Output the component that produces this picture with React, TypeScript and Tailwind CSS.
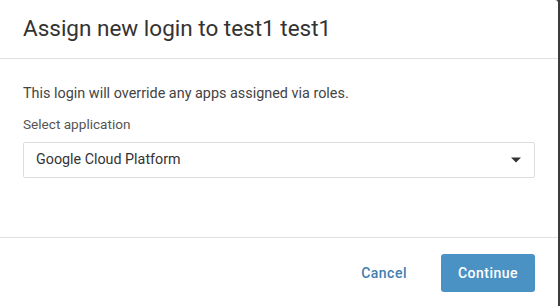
import { IoMdArrowDropdown } from 'react-icons/io';

const App = () => {
    return (
        <div className="flex h-[306px] w-[560px] bg-[#3c3c3c]" style={{ fontFamily: 'Roboto, "Liberation Sans", sans-serif' }}>
            <div className="flex w-[558px] flex-col rounded-tr-[3px] bg-white">
                {/* header */}
                <div className="flex h-[59px] items-center border-b border-[#e1e1e1] px-[23px]">
                    <h1 className="text-[22.5px] font-normal text-[#333333]">Assign new login to test1 test1</h1>
                </div>

                {/* body */}
                <div className="flex h-[179px] flex-col border-b border-[#e1e1e1] px-[23px] pt-[25px]">
                    <p className="text-[14.4px] leading-[20px] text-[#444444]">
                        This login will override any apps assigned via roles.
                    </p>
                    <label className="mt-[10px] text-[13.6px] leading-[20px] text-[#555555]">Select application</label>
                    <div className="mt-[8px] flex h-[36px] items-center justify-between rounded-[2px] border border-[#dddddd] pl-[12px] pr-[8px]">
                        <span className="text-[14.3px] text-[#333333]">Google Cloud Platform</span>
                        <IoMdArrowDropdown className="h-[20px] w-[20px] text-[#333333]" />
                    </div>
                </div>

                {/* footer */}
                <div className="flex flex-1 items-start justify-end gap-[34px] px-[23px] pt-[16px]">
                    <button
                        type="button"
                        className="flex h-[38px] items-center text-[14px] font-medium tracking-[0.5px] text-[#3f7fae]"
                    >
                        Cancel
                    </button>
                    <button
                        type="button"
                        className="flex h-[38px] w-[94px] items-center justify-center rounded-[3px] bg-[#4a92c4] text-[14px] font-medium tracking-[0.5px] text-white"
                    >
                        Continue
                    </button>
                </div>
            </div>
        </div>
    );
};

export default App;
